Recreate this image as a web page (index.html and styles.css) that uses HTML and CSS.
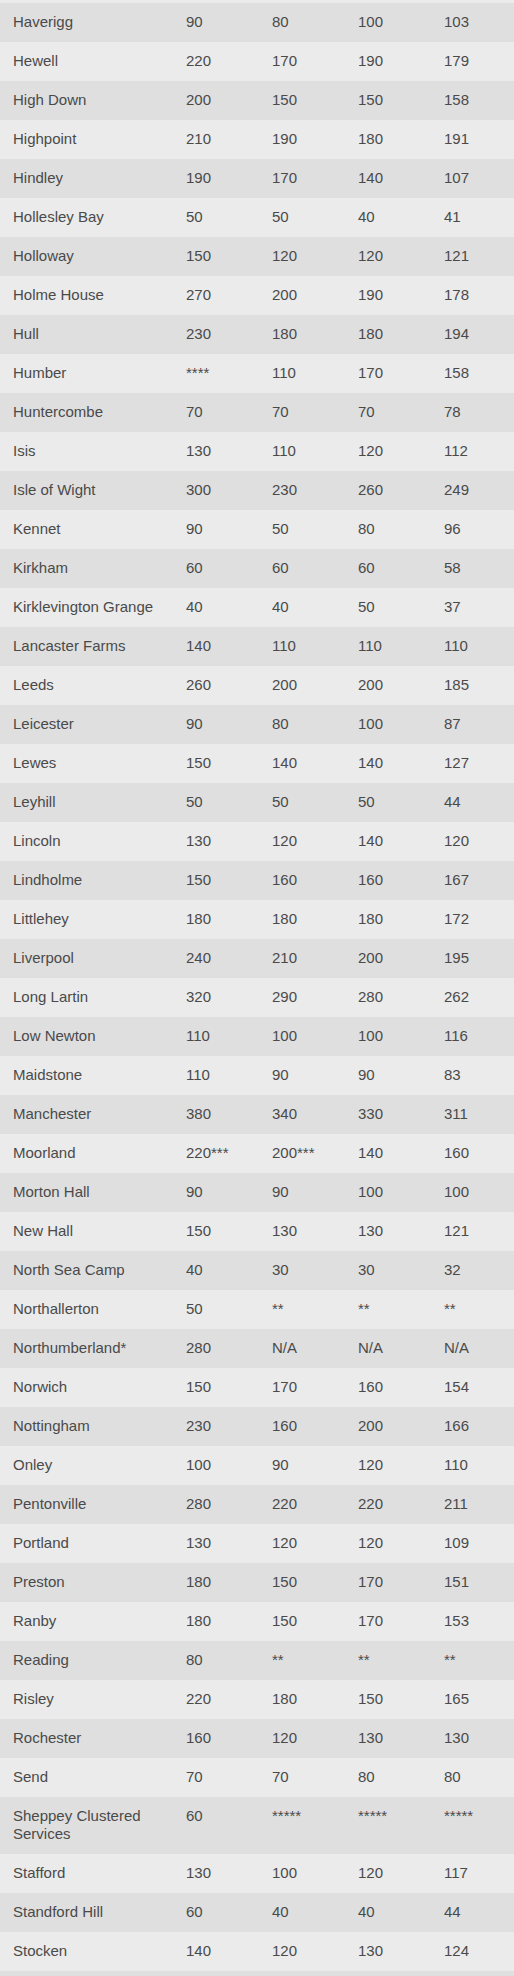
FILE: index.html
```html
<!DOCTYPE html>
<html>
<head>
<meta charset="utf-8">
<link rel="stylesheet" href="styles.css">
</head>
<body>
<div class="wrap">
<table class="data">
<colgroup><col class="c-name"><col class="c-num"><col class="c-num"><col class="c-num"><col></colgroup>
<tbody>
<tr><td>Haverigg</td><td>90</td><td>80</td><td>100</td><td>103</td></tr>
<tr><td>Hewell</td><td>220</td><td>170</td><td>190</td><td>179</td></tr>
<tr><td>High Down</td><td>200</td><td>150</td><td>150</td><td>158</td></tr>
<tr><td>Highpoint</td><td>210</td><td>190</td><td>180</td><td>191</td></tr>
<tr><td>Hindley</td><td>190</td><td>170</td><td>140</td><td>107</td></tr>
<tr><td>Hollesley Bay</td><td>50</td><td>50</td><td>40</td><td>41</td></tr>
<tr><td>Holloway</td><td>150</td><td>120</td><td>120</td><td>121</td></tr>
<tr><td>Holme House</td><td>270</td><td>200</td><td>190</td><td>178</td></tr>
<tr><td>Hull</td><td>230</td><td>180</td><td>180</td><td>194</td></tr>
<tr><td>Humber</td><td>****</td><td>110</td><td>170</td><td>158</td></tr>
<tr><td>Huntercombe</td><td>70</td><td>70</td><td>70</td><td>78</td></tr>
<tr><td>Isis</td><td>130</td><td>110</td><td>120</td><td>112</td></tr>
<tr><td>Isle of Wight</td><td>300</td><td>230</td><td>260</td><td>249</td></tr>
<tr><td>Kennet</td><td>90</td><td>50</td><td>80</td><td>96</td></tr>
<tr><td>Kirkham</td><td>60</td><td>60</td><td>60</td><td>58</td></tr>
<tr><td>Kirklevington Grange</td><td>40</td><td>40</td><td>50</td><td>37</td></tr>
<tr><td>Lancaster Farms</td><td>140</td><td>110</td><td>110</td><td>110</td></tr>
<tr><td>Leeds</td><td>260</td><td>200</td><td>200</td><td>185</td></tr>
<tr><td>Leicester</td><td>90</td><td>80</td><td>100</td><td>87</td></tr>
<tr><td>Lewes</td><td>150</td><td>140</td><td>140</td><td>127</td></tr>
<tr><td>Leyhill</td><td>50</td><td>50</td><td>50</td><td>44</td></tr>
<tr><td>Lincoln</td><td>130</td><td>120</td><td>140</td><td>120</td></tr>
<tr><td>Lindholme</td><td>150</td><td>160</td><td>160</td><td>167</td></tr>
<tr><td>Littlehey</td><td>180</td><td>180</td><td>180</td><td>172</td></tr>
<tr><td>Liverpool</td><td>240</td><td>210</td><td>200</td><td>195</td></tr>
<tr><td>Long Lartin</td><td>320</td><td>290</td><td>280</td><td>262</td></tr>
<tr><td>Low Newton</td><td>110</td><td>100</td><td>100</td><td>116</td></tr>
<tr><td>Maidstone</td><td>110</td><td>90</td><td>90</td><td>83</td></tr>
<tr><td>Manchester</td><td>380</td><td>340</td><td>330</td><td>311</td></tr>
<tr><td>Moorland</td><td>220***</td><td>200***</td><td>140</td><td>160</td></tr>
<tr><td>Morton Hall</td><td>90</td><td>90</td><td>100</td><td>100</td></tr>
<tr><td>New Hall</td><td>150</td><td>130</td><td>130</td><td>121</td></tr>
<tr><td>North Sea Camp</td><td>40</td><td>30</td><td>30</td><td>32</td></tr>
<tr><td>Northallerton</td><td>50</td><td>**</td><td>**</td><td>**</td></tr>
<tr><td>Northumberland*</td><td>280</td><td>N/A</td><td>N/A</td><td>N/A</td></tr>
<tr><td>Norwich</td><td>150</td><td>170</td><td>160</td><td>154</td></tr>
<tr><td>Nottingham</td><td>230</td><td>160</td><td>200</td><td>166</td></tr>
<tr><td>Onley</td><td>100</td><td>90</td><td>120</td><td>110</td></tr>
<tr><td>Pentonville</td><td>280</td><td>220</td><td>220</td><td>211</td></tr>
<tr><td>Portland</td><td>130</td><td>120</td><td>120</td><td>109</td></tr>
<tr><td>Preston</td><td>180</td><td>150</td><td>170</td><td>151</td></tr>
<tr><td>Ranby</td><td>180</td><td>150</td><td>170</td><td>153</td></tr>
<tr><td>Reading</td><td>80</td><td>**</td><td>**</td><td>**</td></tr>
<tr><td>Risley</td><td>220</td><td>180</td><td>150</td><td>165</td></tr>
<tr><td>Rochester</td><td>160</td><td>120</td><td>130</td><td>130</td></tr>
<tr><td>Send</td><td>70</td><td>70</td><td>80</td><td>80</td></tr>
<tr><td>Sheppey Clustered Services</td><td>60</td><td>*****</td><td>*****</td><td>*****</td></tr>
<tr><td>Stafford</td><td>130</td><td>100</td><td>120</td><td>117</td></tr>
<tr><td>Standford Hill</td><td>60</td><td>40</td><td>40</td><td>44</td></tr>
<tr><td>Stocken</td><td>140</td><td>120</td><td>130</td><td>124</td></tr>
<tr><td>&nbsp;</td><td></td><td></td><td></td><td></td></tr>
</tbody>
</table>
</div>
</body>
</html>
```

FILE: styles.css
```css
html, body {
  margin: 0;
  padding: 0;
  background: #ebebeb;
}
body {
  overflow: hidden;
}
.wrap {
  padding-top: 3px;
  background: #ebebeb;
}
.data {
  width: 517px;
  table-layout: fixed;
  border-collapse: collapse;
  border-spacing: 0;
  font-family: "Liberation Sans", Arial, sans-serif;
  font-size: 15px;
  line-height: 18px;
  color: #4a4a4a;
}
.c-name { width: 173px; }
.c-num { width: 86px; }
.data td {
  padding: 10px 13px 11px 13px;
  vertical-align: top;
  white-space: normal;
}
.data tr:nth-child(odd) td {
  background: #dfdfdf;
}
.data tr:nth-child(even) td {
  background: #ebebeb;
}
```
